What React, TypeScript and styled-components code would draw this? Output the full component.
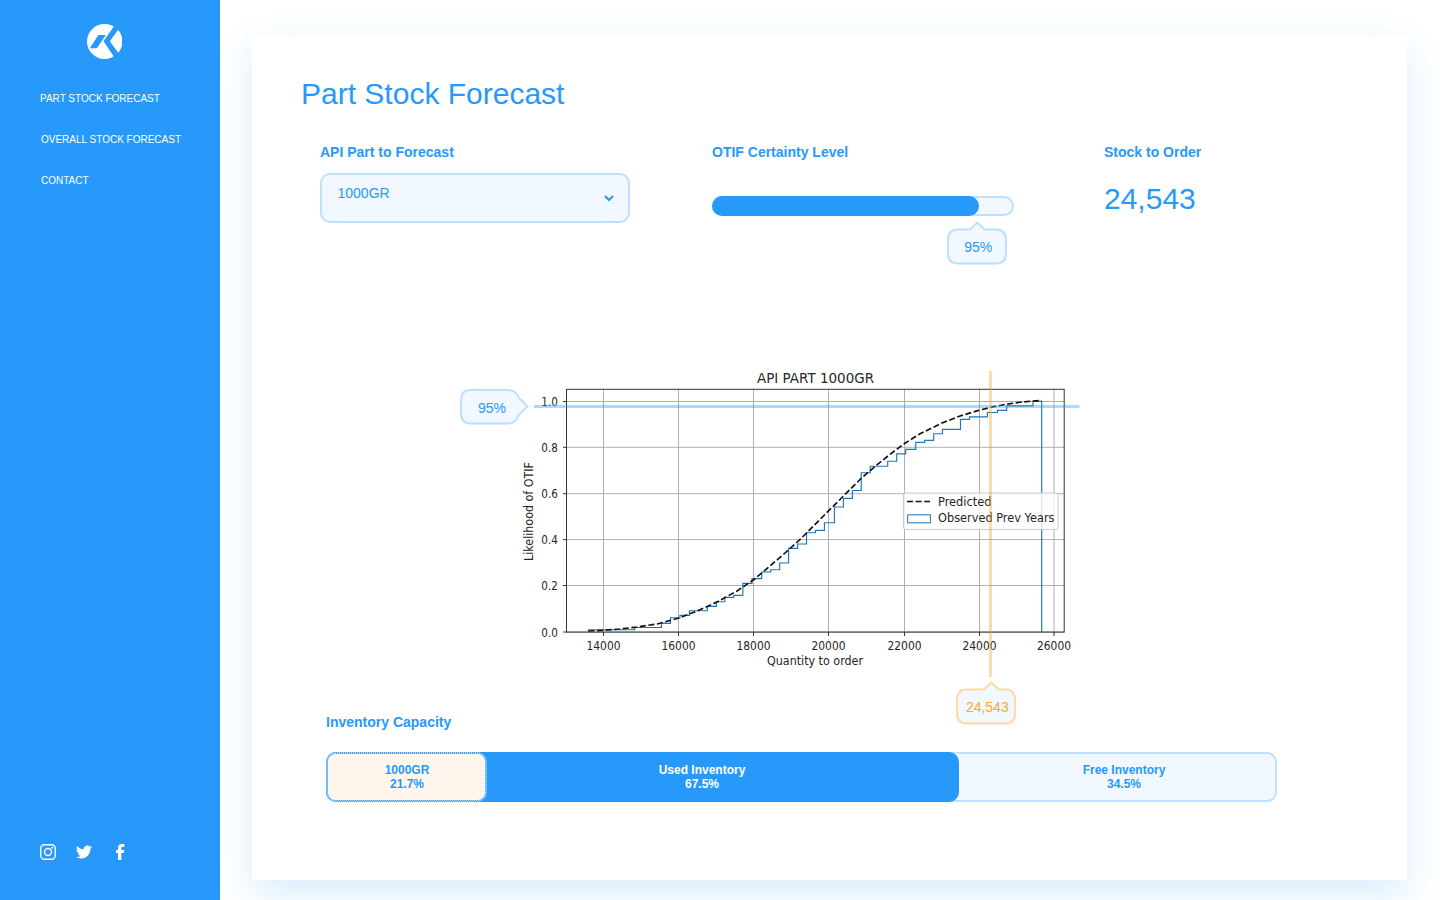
import React from 'react';
import styled, { createGlobalStyle } from 'styled-components';

const BLUE = '#2699fb';
const PALE = '#f1f8ff';
const LINE = '#bce0fd';
const ORANGE = '#ffd9a8';

const MENUS = ['PART STOCK FORECAST', 'OVERALL STOCK FORECAST', 'CONTACT'];

const GlobalStyle = createGlobalStyle`
  * {
    box-sizing: border-box;
  }
  body {
    margin: 0;
    overflow: hidden;
    background: #fff;
    color: ${BLUE};
    font-family: 'Liberation Sans', Arial, sans-serif;
  }
`;

const Page = styled.div`
  display: flex;
  height: 900px;
`;

const Sidebar = styled.nav`
  display: flex;
  flex-direction: column;
  width: 220px;
  padding: 24px 0 40px 40px;
  background: ${BLUE};
`;

const Logo = styled.a`
  display: block;
  height: 35px;
  margin-left: 47px;
`;

const Menu = styled.ul`
  display: flex;
  flex-direction: column;
  gap: 29px;
  margin: 34px 0 0;
  padding: 0;
  list-style: none;
`;

const MenuItem = styled.li`
  font-size: 10px;
  line-height: 12px;
  color: #fff;

  & + & {
    padding-left: 1px;
  }
`;

const Socials = styled.div`
  display: flex;
  gap: 20px;
  height: 16px;
  margin-top: auto;
`;

const Main = styled.main`
  flex: 1;
  padding: 36px 33px 20px 32px;
`;

const Card = styled.section`
  position: relative;
  height: 844px;
  padding: 40px 48px 0;
  background: #fff;
  box-shadow: 0 14px 36px rgba(38, 153, 251, 0.18);
`;

const Title = styled.h1`
  margin: 0 0 0 1px;
  font-size: 30px;
  font-weight: 400;
  line-height: 36px;
`;

const Controls = styled.div`
  display: grid;
  grid-template-columns: 392px 392px 1fr;
  height: 254px;
  padding: 32px 0 0 20px;
`;

const Label = styled.h2`
  margin: 0;
  font-size: 14px;
  font-weight: 700;
  line-height: 16px;
`;

const Select = styled.button`
  display: flex;
  justify-content: space-between;
  align-items: flex-start;
  width: 310px;
  height: 50px;
  margin-top: 13px;
  padding: 10px 14px 0 15.5px;
  border: 2px solid ${LINE};
  border-radius: 10px;
  background: ${PALE};
  color: ${BLUE};
  font: 14px/17px 'Liberation Sans', Arial, sans-serif;

  svg {
    margin-top: 10px;
  }
`;

const Track = styled.div`
  width: 302px;
  height: 20px;
  margin-top: 36px;
  border: 2px solid ${LINE};
  border-radius: 10px;
  background: ${PALE};
`;

const Fill = styled.div`
  width: 267px;
  height: 20px;
  margin: -2px;
  border-radius: 10px;
  background: ${BLUE};
`;

const Amount = styled.div`
  margin-top: 21px;
  font-size: 30px;
  line-height: 36px;
`;

const Bubble = styled.div<{ $x: number; $y: number }>`
  position: absolute;
  left: ${p => p.$x}px;
  top: ${p => p.$y}px;

  svg {
    display: block;
  }
`;

const Chart = styled.svg`
  display: block;
  margin: 0 0 0 212px;
  font-family: 'DejaVu Sans', sans-serif;
`;

const Inventory = styled.div`
  padding: 36px 0 0 26px;
`;

const Bar = styled.div`
  display: flex;
  width: 951px;
  height: 50px;
  margin-top: 22px;
  border-radius: 10px;
  background: ${PALE};
  box-shadow: inset 0 0 0 2px ${LINE};
`;

const Used = styled.div`
  display: flex;
  width: 633px;
  border-radius: 10px;
  background: ${BLUE};
`;

const Segment = styled.div<{ $white?: boolean }>`
  flex: 1;
  padding: ${p => (p.$white ? '11px 42px 0 0' : '11px 0 0 12px')};
  font-size: 12px;
  font-weight: 700;
  line-height: 14px;
  text-align: center;
  color: ${p => (p.$white ? '#fff' : BLUE)};
`;

// the border and the outline together give a fine two pixel dotted edge
const PartSegment = styled(Segment)`
  flex: 0 0 161px;
  padding: 10px 0 0 1px;
  border: 1px dotted ${BLUE};
  border-radius: 10px;
  outline: 1px dotted ${BLUE};
  outline-offset: -2px;
  background: linear-gradient(#fff7ee, #fff7ee) padding-box, linear-gradient(${LINE}, ${LINE}) border-box;
  box-shadow: inset 0 0 0 1px ${LINE};
`;

const X_TICKS = [
  [603.5, '14000'],
  [678.5, '16000'],
  [753.5, '18000'],
  [828.5, '20000'],
  [904.5, '22000'],
  [979.5, '24000'],
  [1054, '26000'],
] as const;

const Y_TICKS = [
  [401.5, '1.0'],
  [447.3, '0.8'],
  [493.7, '0.6'],
  [539.6, '0.4'],
  [585.5, '0.2'],
  [632, '0.0'],
] as const;

// height of each step and the x where it ends
const STEPS = [
  [629.7, 634.7], [627.5, 661.4], [623.4, 670.4], [617.7, 680], [615.4, 689.4],
  [610.7, 707.3], [606.4, 716.4], [601.7, 724.8], [597.4, 733.8], [595.4, 742.8],
  [583.4, 752], [578.6, 761.7], [572, 770.7], [569.7, 779.7], [563, 788.6],
  [548.4, 797.6], [544, 806.5], [532.7, 815.4], [530.4, 824.4], [522.7, 834.4],
  [507, 843.4], [498.4, 852.4], [490.5, 861.2], [472.7, 870.2], [466.2, 887.7],
  [461.2, 896.7], [453.8, 905.7], [449.4, 915.7], [442.4, 924.7], [440.4, 933.7],
  [433.7, 942.5], [429.4, 960.5], [419.4, 969.5], [416.8, 987.4], [412.5, 997.4],
  [410.4, 1006.7], [405.8, 1033], [401.4, 1041.7],
];

const PREDICTED = [
  [588.5, 631], [603.5, 630.3], [620, 629], [637, 627], [657, 624], [679, 618],
  [697, 611], [717, 602], [737, 591], [754, 579.5], [770, 566], [785, 553],
  [799.5, 540], [814, 525.5], [828.7, 510.7], [843.5, 496], [861, 478.5],
  [876, 465.7], [890, 454.3], [904.5, 443.5], [920, 433.8], [942, 423], [960, 416],
  [979, 410.3], [993, 406.8], [1007, 404.2], [1020, 402.3], [1033, 401], [1041.7, 400.5],
];

const observed =
  'M588.5 632' + STEPS.map(([y, x]) => `V${y}H${x}`).join('') + 'V632';

function SocialIcons() {
  return (
    <Socials>
      <svg width="16" height="16" viewBox="0 0 16 16" fill="none" stroke="#fff" strokeWidth="1.4">
        <rect x="0.7" y="0.7" width="14.6" height="14.6" rx="3.8" />
        <circle cx="8" cy="8" r="3.5" />
        <circle cx="12.2" cy="3.8" r="1" fill="#fff" stroke="none" />
      </svg>
      <svg width="16" height="16" viewBox="0 0 24 24" fill="#fff">
        <path d="M23.95 4.57a10 10 0 0 1-2.82.77 4.96 4.96 0 0 0 2.16-2.72c-.95.55-2 .95-3.13 1.18a4.92 4.92 0 0 0-8.38 4.48C7.69 8.1 4.07 6.13 1.64 3.16a4.93 4.93 0 0 0 1.52 6.57 4.9 4.9 0 0 1-2.23-.61v.06a4.92 4.92 0 0 0 3.95 4.83 5 5 0 0 1-2.21.08 4.94 4.94 0 0 0 4.6 3.42A9.87 9.87 0 0 1 0 19.54a14 14 0 0 0 7.55 2.21c9.05 0 14-7.5 14-13.98 0-.21 0-.42-.02-.63a9.94 9.94 0 0 0 2.42-2.57z" />
      </svg>
      <svg width="16" height="16" viewBox="0 0 16 16" fill="#fff">
        <path d="M6 16V9H4V6h2V4c0-2.7 1.3-4 4.1-4h2.3v3h-1.6C9.6 3 9.3 3.5 9.3 4.3V6h3L12 9H9.3v7z" />
      </svg>
    </Socials>
  );
}

type TopBubbleProps = {
  text: string;
  x: number;
  y: number;
  stroke: string;
  color: string;
  tip: number;
};

function TopBubble({ text, x, y, stroke, color, tip }: TopBubbleProps) {
  return (
    <Bubble $x={x} $y={y}>
      <svg width="60" height="44" viewBox="0 0 60 44" fontSize="14" fill={color}>
        <path
          d={`M11 8.5H${tip - 7.5}L${tip} 1.5L${tip + 7.5} 8.5H49Q59 8.5 59 19V32.500Q59 42.500 49 42.500H11Q1 42.500 1 32.500V19Q1 8.500 11 8.500Z`}
          fill={PALE}
          stroke={stroke}
          strokeWidth="2"
        />
        <text x="31.3" y="31" textAnchor="middle">{text}</text>
      </svg>
    </Bubble>
  );
}

function ForecastChart() {
  return (
    <Chart width="580" height="312" viewBox="512 366 580 312" fontSize="12">
      <g stroke="#b0b0b0" strokeWidth="1">
        {X_TICKS.map(([x]) => <line key={x} x1={x} x2={x} y1="389" y2="632" />)}
        {Y_TICKS.map(([y]) => <line key={y} x1="566" x2="1064" y1={y} y2={y} />)}
      </g>
      <path d={observed} fill="none" stroke="#1f77b4" strokeWidth="1.15" />
      <polyline
        points={PREDICTED.map(p => p.join(',')).join(' ')}
        fill="none"
        stroke="#111"
        strokeWidth="1.65"
        strokeDasharray="6 2.6"
      />
      <rect x="566.5" y="389.3" width="497.7" height="242.8" fill="none" stroke="#333" strokeWidth="1" />
      <g stroke="#333" strokeWidth="1">
        {X_TICKS.map(([x]) => <line key={x} x1={x} x2={x} y1="632" y2="636" />)}
        {Y_TICKS.map(([y]) => <line key={y} x1="563" x2="566.5" y1={y} y2={y} />)}
      </g>
      <rect x="903.5" y="493" width="154.5" height="36.5" rx="2" fill="#fff" fillOpacity="0.8" stroke="#ccc" />
      <line x1="907" x2="930" y1="501.5" y2="501.5" stroke="#111" strokeWidth="1.65" strokeDasharray="6 2.6" />
      <rect x="907.7" y="514.8" width="22.7" height="8" fill="none" stroke="#1f77b4" />
      <g fill="#262626">
        <text x="938" y="505.6" textLength="53.5" lengthAdjust="spacingAndGlyphs">Predicted</text>
        <text x="938" y="522.4" textLength="116.5" lengthAdjust="spacingAndGlyphs">Observed Prev Years</text>
        <text x="757" y="383" fontSize="13.5" textLength="117" lengthAdjust="spacingAndGlyphs">API PART 1000GR</text>
        <text x="767" y="665" textLength="96" lengthAdjust="spacingAndGlyphs">Quantity to order</text>
        <text transform="translate(532.5 561) rotate(-90)" textLength="99" lengthAdjust="spacingAndGlyphs">Likelihood of OTIF</text>
        {X_TICKS.map(([x, label]) => (
          <text key={label} x={x - 17} y="649.5" textLength="34" lengthAdjust="spacingAndGlyphs">{label}</text>
        ))}
        {Y_TICKS.map(([y, label]) => (
          <text key={label} x="541.3" y={y + 4.7} textLength="16.5" lengthAdjust="spacingAndGlyphs">{label}</text>
        ))}
      </g>
      <rect x="534" y="405" width="545.5" height="3" fill={BLUE} fillOpacity="0.38" />
      <rect x="989" y="371" width="3" height="306" fill="#fb9f1d" fillOpacity="0.38" />
    </Chart>
  );
}

function App() {
  return (
    <Page>
      <GlobalStyle />
      <Sidebar>
        <Logo>
          <svg width="35" height="35" viewBox="0 0 35 35">
            <circle cx="17.5" cy="17.5" r="17.5" fill="#fff" />
            <path
              d="M28.500 0L16.500 17.300L28.500 35H35V33L23 17.300L35 1V0Z M11.300 11H18.800L9.900 24.200H2.800Z"
              fill={BLUE}
            />
            <path d="M31.300 6L23 17.300L31.300 28.700A17.500 17.500 0 0 0 31.300 6Z" fill="#fff" />
          </svg>
        </Logo>
        <Menu>
          {MENUS.map(menu => (
            <MenuItem key={menu}>{menu}</MenuItem>
          ))}
        </Menu>
        <SocialIcons />
      </Sidebar>
      <Main>
        <Card>
          <Title>Part Stock Forecast</Title>
          <Controls>
            <div>
              <Label>API Part to Forecast</Label>
              <Select>
                1000GR
                <svg width="10" height="7" viewBox="0 0 10 7">
                  <path d="M1 1L5 5L9 1" fill="none" stroke={BLUE} strokeWidth="2" />
                </svg>
              </Select>
            </div>
            <div>
              <Label>OTIF Certainty Level</Label>
              <Track>
                <Fill />
              </Track>
            </div>
            <div>
              <Label>Stock to Order</Label>
              <Amount>24,543</Amount>
            </div>
          </Controls>
          <ForecastChart />
          <Inventory>
            <Label>Inventory Capacity</Label>
            <Bar>
              <Used>
                <PartSegment>
                  1000GR
                  <br />
                  21.7%
                </PartSegment>
                <Segment $white>
                  Used Inventory
                  <br />
                  67.5%
                </Segment>
              </Used>
              <Segment>
                Free Inventory
                <br />
                34.5%
              </Segment>
            </Bar>
          </Inventory>
          <TopBubble text="95%" x={695} y={185} stroke={LINE} color={BLUE} tip={30.3} />
          <TopBubble text="24,543" x={704} y={645} stroke={ORANGE} color="#f9a825" tip={35.3} />
          <Bubble $x={208} $y={353}>
            <svg width="70" height="36" viewBox="0 0 70 36" fontSize="14" fill={BLUE}>
              <path
                d="M11 1H48Q56 1 59 9L67.500 17.300L59 25.500Q56 34.500 48 34.500H11Q1 34.500 1 24.500V11Q1 1 11 1Z"
                fill={PALE}
                stroke={LINE}
                strokeWidth="2"
              />
              <text x="32" y="24" textAnchor="middle">95%</text>
            </svg>
          </Bubble>
        </Card>
      </Main>
    </Page>
  );
}

export default App;
